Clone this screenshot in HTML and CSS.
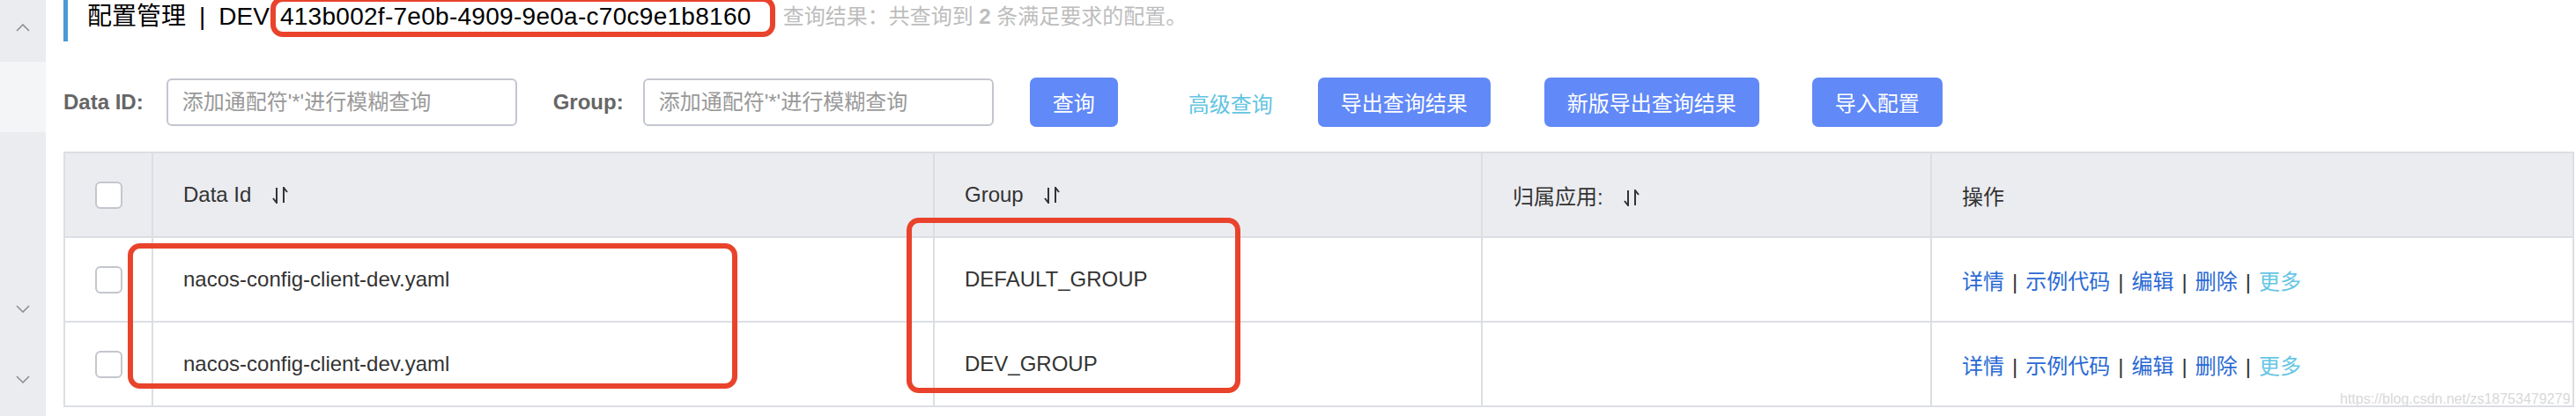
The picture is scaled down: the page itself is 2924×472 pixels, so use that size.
FILE: index.html
```html
<!DOCTYPE html>
<html>

<head>
	<meta charset="UTF-8">
	<title>配置管理</title>
	<link rel="stylesheet" href="styles.css">
</head>

<body>
	<div class="page">
		<aside class="sidebar">
			<div class="nav-group">
				<svg class="chevron" width="16" height="9" viewBox="0 0 16 9"><polyline points="1,8 8,1 15,8" /></svg>
			</div>
			<div class="nav-item active"></div>
			<div class="nav-item"></div>
			<div class="nav-item"></div>
			<div class="nav-item">
				<svg class="chevron" width="16" height="9" viewBox="0 0 16 9"><polyline points="1,1 8,8 15,1" /></svg>
			</div>
			<div class="nav-item">
				<svg class="chevron" width="16" height="9" viewBox="0 0 16 9"><polyline points="1,1 8,8 15,1" /></svg>
			</div>
		</aside>

		<main class="content">
			<div class="page-title">
				<span class="title-cn">配置管理</span>
				<span class="title-sep">|</span>
				<span>DEV</span>
				<span class="ns-id">413b002f-7e0b-4909-9e0a-c70c9e1b8160</span>
				<span class="result-info">查询结果：共查询到 <b>2</b> 条满足要求的配置。</span>
			</div>

			<form class="filter-bar">
				<label class="filter-label" for="data-id">Data ID:</label>
				<input id="data-id" class="filter-input" type="text" placeholder="添加通配符'*'进行模糊查询">
				<label class="filter-label group-label" for="group">Group:</label>
				<input id="group" class="filter-input" type="text" placeholder="添加通配符'*'进行模糊查询">
				<button type="button" class="btn btn-search">查询</button>
				<a class="advanced-link">高级查询</a>
				<button type="button" class="btn btn-export">导出查询结果</button>
				<button type="button" class="btn btn-export-new">新版导出查询结果</button>
				<button type="button" class="btn btn-import">导入配置</button>
			</form>

			<table class="config-table">
				<colgroup>
					<col class="col-check">
					<col class="col-dataid">
					<col class="col-group">
					<col class="col-app">
					<col>
				</colgroup>
				<thead>
					<tr>
						<th class="cell-check"><span class="checkbox"></span></th>
						<th>Data Id <svg class="sort-icon" width="20" height="19" viewBox="0 0 20 19"><path d="M6 1 V18 L2 13" /><path d="M14 18 V1 L18 6" /></svg></th>
						<th>Group <svg class="sort-icon" width="20" height="19" viewBox="0 0 20 19"><path d="M6 1 V18 L2 13" /><path d="M14 18 V1 L18 6" /></svg></th>
						<th>归属应用: <svg class="sort-icon" width="20" height="19" viewBox="0 0 20 19"><path d="M6 1 V18 L2 13" /><path d="M14 18 V1 L18 6" /></svg></th>
						<th>操作</th>
					</tr>
				</thead>
				<tbody>
					<tr>
						<td class="cell-check"><span class="checkbox"></span></td>
						<td>nacos-config-client-dev.yaml</td>
						<td>DEFAULT_GROUP</td>
						<td></td>
						<td class="actions">
							<a>详情</a><span class="sep">|</span><a>示例代码</a><span class="sep">|</span><a>编辑</a><span class="sep">|</span><a>删除</a><span class="sep">|</span><a class="more">更多</a>
						</td>
					</tr>
					<tr>
						<td class="cell-check"><span class="checkbox"></span></td>
						<td>nacos-config-client-dev.yaml</td>
						<td>DEV_GROUP</td>
						<td></td>
						<td class="actions">
							<a>详情</a><span class="sep">|</span><a>示例代码</a><span class="sep">|</span><a>编辑</a><span class="sep">|</span><a>删除</a><span class="sep">|</span><a class="more">更多</a>
						</td>
					</tr>
				</tbody>
			</table>
		</main>

		<!-- 赤枠の注釈 -->
		<div class="mark mark-ns"></div>
		<div class="mark mark-dataid"></div>
		<div class="mark mark-group"></div>

		<div class="watermark">https://blog.csdn.net/zs18753479279</div>
	</div>
</body>

</html>
```

FILE: styles.css
```css
body {
	margin: 0;
	background: #fff;
	font-family: "Liberation Sans", "Noto Sans CJK SC", sans-serif;
	color: #333;
}

.page {
	position: relative;
	display: flex;
	height: 472px;
	overflow: hidden;
}

/* サイドバー */
.sidebar {
	width: 52px;
	flex-shrink: 0;
	background: #ebecf0;
	display: flex;
	flex-direction: column;
}

.nav-group {
	height: 70px;
	display: flex;
	justify-content: center;
	align-items: flex-start;
	padding-top: 27px;
	box-sizing: border-box;
}

.nav-item {
	height: 80px;
	display: flex;
	justify-content: center;
	align-items: center;
}

.nav-item.active {
	background: #f4f5f7;
}

.chevron polyline {
	fill: none;
	stroke: #8a8b90;
	stroke-width: 1.5;
}

.content {
	flex: 1;
	padding-left: 20px;
	padding-right: 2px;
}

/* タイトル */
.page-title {
	height: 47px;
	border-left: 5px solid #4a9ad5;
	padding-left: 22px;
	display: flex;
	align-items: flex-start;
	line-height: 38px;
	font-size: 28px;
	color: #000;
	white-space: nowrap;
}

.title-sep {
	margin: 0 15px;
}

.ns-id {
	margin-left: 12px;
	letter-spacing: 0.28px;
}

.result-info {
	margin-left: 36px;
	font-size: 24px;
	color: #bdbdbd;
}

/* 検索バー */
.filter-bar {
	margin: 41px 0 0;
	height: 56px;
	display: flex;
	align-items: center;
	white-space: nowrap;
}

.filter-label {
	font-size: 24px;
	font-weight: bold;
	color: #666;
	margin-right: 26px;
}

.group-label {
	margin-left: 41px;
	margin-right: 22px;
}

.filter-input {
	width: 398px;
	height: 54px;
	box-sizing: border-box;
	border: 2px solid #c4c6cf;
	border-radius: 6px;
	padding: 0 16px;
	font-family: "Liberation Sans", "Noto Sans CJK SC", sans-serif;
	font-size: 24px;
	color: #333;
	outline: none;
}

.filter-input::placeholder {
	color: #999;
}

.btn {
	height: 56px;
	padding: 0 26px;
	border: none;
	border-radius: 7px;
	background: #6189f7;
	color: #fff;
	font-family: "Noto Sans CJK SC", sans-serif;
	font-size: 24px;
	line-height: 56px;
	cursor: pointer;
}

.btn-search {
	margin-left: 41px;
}

.advanced-link {
	margin-left: 80px;
	font-family: "Noto Sans CJK SC", sans-serif;
	font-size: 24px;
	color: #63c5e0;
}

.btn-export {
	margin-left: 51px;
}

.btn-export-new {
	margin-left: 61px;
}

.btn-import {
	margin-left: 60px;
}

/* テーブル */
.config-table {
	margin-top: 28px;
	width: 2850px;
	table-layout: fixed;
	border-collapse: collapse;
	border: 2px solid #dcdee3;
	font-size: 24px;
}

.col-check {
	width: 100px;
}

.col-dataid {
	width: 887px;
}

.col-group {
	width: 622px;
}

.col-app {
	width: 510px;
}

.config-table th,
.config-table td {
	height: 94px;
	padding: 0 0 0 34px;
	border: 2px solid #dcdee3;
	text-align: left;
	vertical-align: middle;
	font-weight: normal;
	color: #333;
	white-space: nowrap;
}

.config-table thead th {
	background: #ebecf0;
}

.config-table .cell-check {
	padding: 0;
	text-align: center;
}

.checkbox {
	display: inline-block;
	width: 31px;
	height: 31px;
	box-sizing: border-box;
	border: 2px solid #c4c6cf;
	border-radius: 6px;
	background: #fff;
	vertical-align: middle;
}

.sort-icon {
	margin-left: 16px;
	vertical-align: -2px;
}

.sort-icon path {
	fill: none;
	stroke: #333;
	stroke-width: 2;
}

.actions a {
	color: #2a6ad4;
	cursor: pointer;
}

.actions a.more {
	color: #66c6e5;
}

.actions .sep {
	margin: 0 9px;
	color: #333;
}

/* 注釈の赤枠 */
.mark {
	position: absolute;
	box-sizing: border-box;
	border: 6px solid #e9432c;
	border-radius: 14px;
}

.mark-ns {
	left: 307px;
	top: -4px;
	width: 573px;
	height: 46px;
}

.mark-dataid {
	left: 145px;
	top: 276px;
	width: 692px;
	height: 165px;
}

.mark-group {
	left: 1029px;
	top: 247px;
	width: 379px;
	height: 199px;
}

.watermark {
	position: absolute;
	left: 2656px;
	top: 444px;
	font-size: 16px;
	color: #d8d8d8;
	text-shadow: 0 0 1px #fff;
}
```
